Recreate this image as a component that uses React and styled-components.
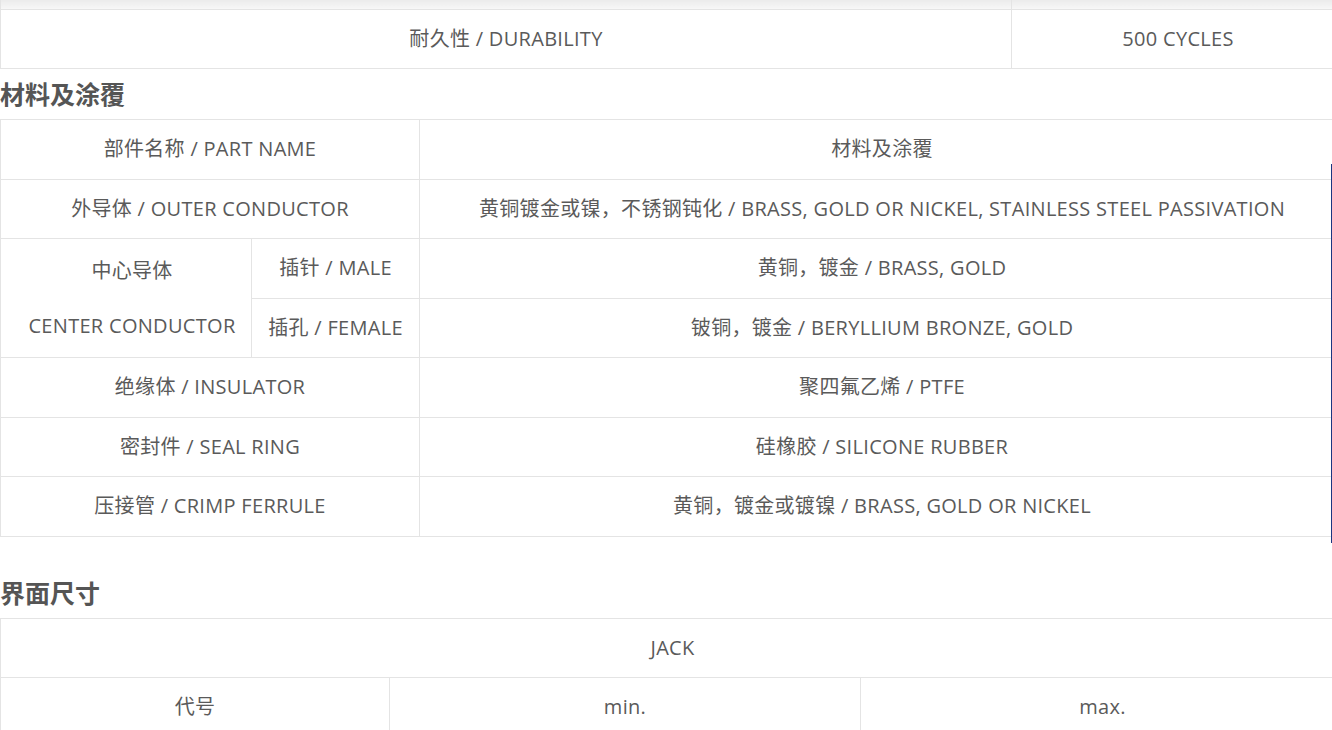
import React from "react"
import styled, { createGlobalStyle } from "styled-components"

const GlobalStyle = createGlobalStyle`
  html, body {
    margin: 0;
    padding: 0;
    background: #fff;
    overflow: hidden;
  }
  body {
    font-family: "Open Sans", "Noto Sans CJK SC", sans-serif;
    color: #5a5a5a;
  }
`

const Page = styled.div`
  width: 1344px;
  display: flex;
  flex-direction: column;
`

const SpecTable = styled.table`
  width: 1344px;
  border-collapse: collapse;
  table-layout: fixed;
  font-size: 20px;
  letter-spacing: 0.3px;
`

const Row = styled.tr`
  height: ${p => p.$h || 59.5}px;
`

const Cell = styled.td`
  border: 1px solid #e4e4e4;
  text-align: center;
  vertical-align: middle;
  padding: 0 8px;
  line-height: 30px;
  white-space: nowrap;
  color: #5a5a5a;
`

const FadeCell = styled(Cell)`
  padding: 0;
  border-top: 0;
  background: linear-gradient(#ebebeb, #f7f7f7);
`

const Heading = styled.h3`
  margin: ${p => p.$gap || 0}px 0 ${p => p.$after || 0}px;
  padding: 2px 0 3px;
  height: 45px;
  line-height: 45px;
  font-size: 25px;
  font-weight: bold;
  color: #555;
  font-family: "Noto Sans CJK SC", sans-serif;
`

const Stack = styled.div`
  display: flex;
  flex-direction: column;
  gap: 25px;
  padding-left: 12px;
  margin-top: 1px;
`

const EdgeLine = styled.div`
  position: fixed;
  top: 164px;
  right: 0;
  width: 1px;
  height: 379px;
  background: #1b3680;
`

const materials = [
  ["外导体 / OUTER CONDUCTOR", "黄铜镀金或镍，不锈钢钝化 / BRASS, GOLD OR NICKEL, STAINLESS STEEL PASSIVATION"],
]

const materialsTail = [
  ["绝缘体 / INSULATOR", "聚四氟乙烯 / PTFE"],
  ["密封件 / SEAL RING", "硅橡胶 / SILICONE RUBBER"],
  ["压接管 / CRIMP FERRULE", "黄铜，镀金或镀镍 / BRASS, GOLD OR NICKEL"],
]

export default function App() {
  return (
    <Page>
      <GlobalStyle />
      <SpecTable>
        <colgroup>
          <col style={{ width: 1011 }} />
          <col style={{ width: 333 }} />
        </colgroup>
        <tbody>
          <Row $h={9}>
            <FadeCell />
            <FadeCell />
          </Row>
          <Row>
            <Cell>耐久性 / DURABILITY</Cell>
            <Cell>500 CYCLES</Cell>
          </Row>
        </tbody>
      </SpecTable>

      <Heading>材料及涂覆</Heading>
      <SpecTable>
        <colgroup>
          <col style={{ width: 251 }} />
          <col style={{ width: 168 }} />
          <col style={{ width: 925 }} />
        </colgroup>
        <tbody>
          <Row>
            <Cell colSpan={2}>部件名称 / PART NAME</Cell>
            <Cell>材料及涂覆</Cell>
          </Row>
          {materials.map(([a, b]) => (
            <Row key={a}>
              <Cell colSpan={2}>{a}</Cell>
              <Cell>{b}</Cell>
            </Row>
          ))}
          <Row>
            <Cell rowSpan={2}>
              <Stack>
                <span>中心导体</span>
                <span>CENTER CONDUCTOR</span>
              </Stack>
            </Cell>
            <Cell>插针 / MALE</Cell>
            <Cell>黄铜，镀金 / BRASS, GOLD</Cell>
          </Row>
          <Row>
            <Cell>插孔 / FEMALE</Cell>
            <Cell>铍铜，镀金 / BERYLLIUM BRONZE, GOLD</Cell>
          </Row>
          {materialsTail.map(([a, b]) => (
            <Row key={a}>
              <Cell colSpan={2}>{a}</Cell>
              <Cell>{b}</Cell>
            </Row>
          ))}
        </tbody>
      </SpecTable>

      <Heading $gap={31}>界面尺寸</Heading>
      <SpecTable>
        <colgroup>
          <col style={{ width: 389 }} />
          <col style={{ width: 471 }} />
          <col style={{ width: 484 }} />
        </colgroup>
        <tbody>
          <Row>
            <Cell colSpan={3}>JACK</Cell>
          </Row>
          <Row>
            <Cell>代号</Cell>
            <Cell>min.</Cell>
            <Cell>max.</Cell>
          </Row>
        </tbody>
      </SpecTable>
      <EdgeLine />
    </Page>
  )
}
